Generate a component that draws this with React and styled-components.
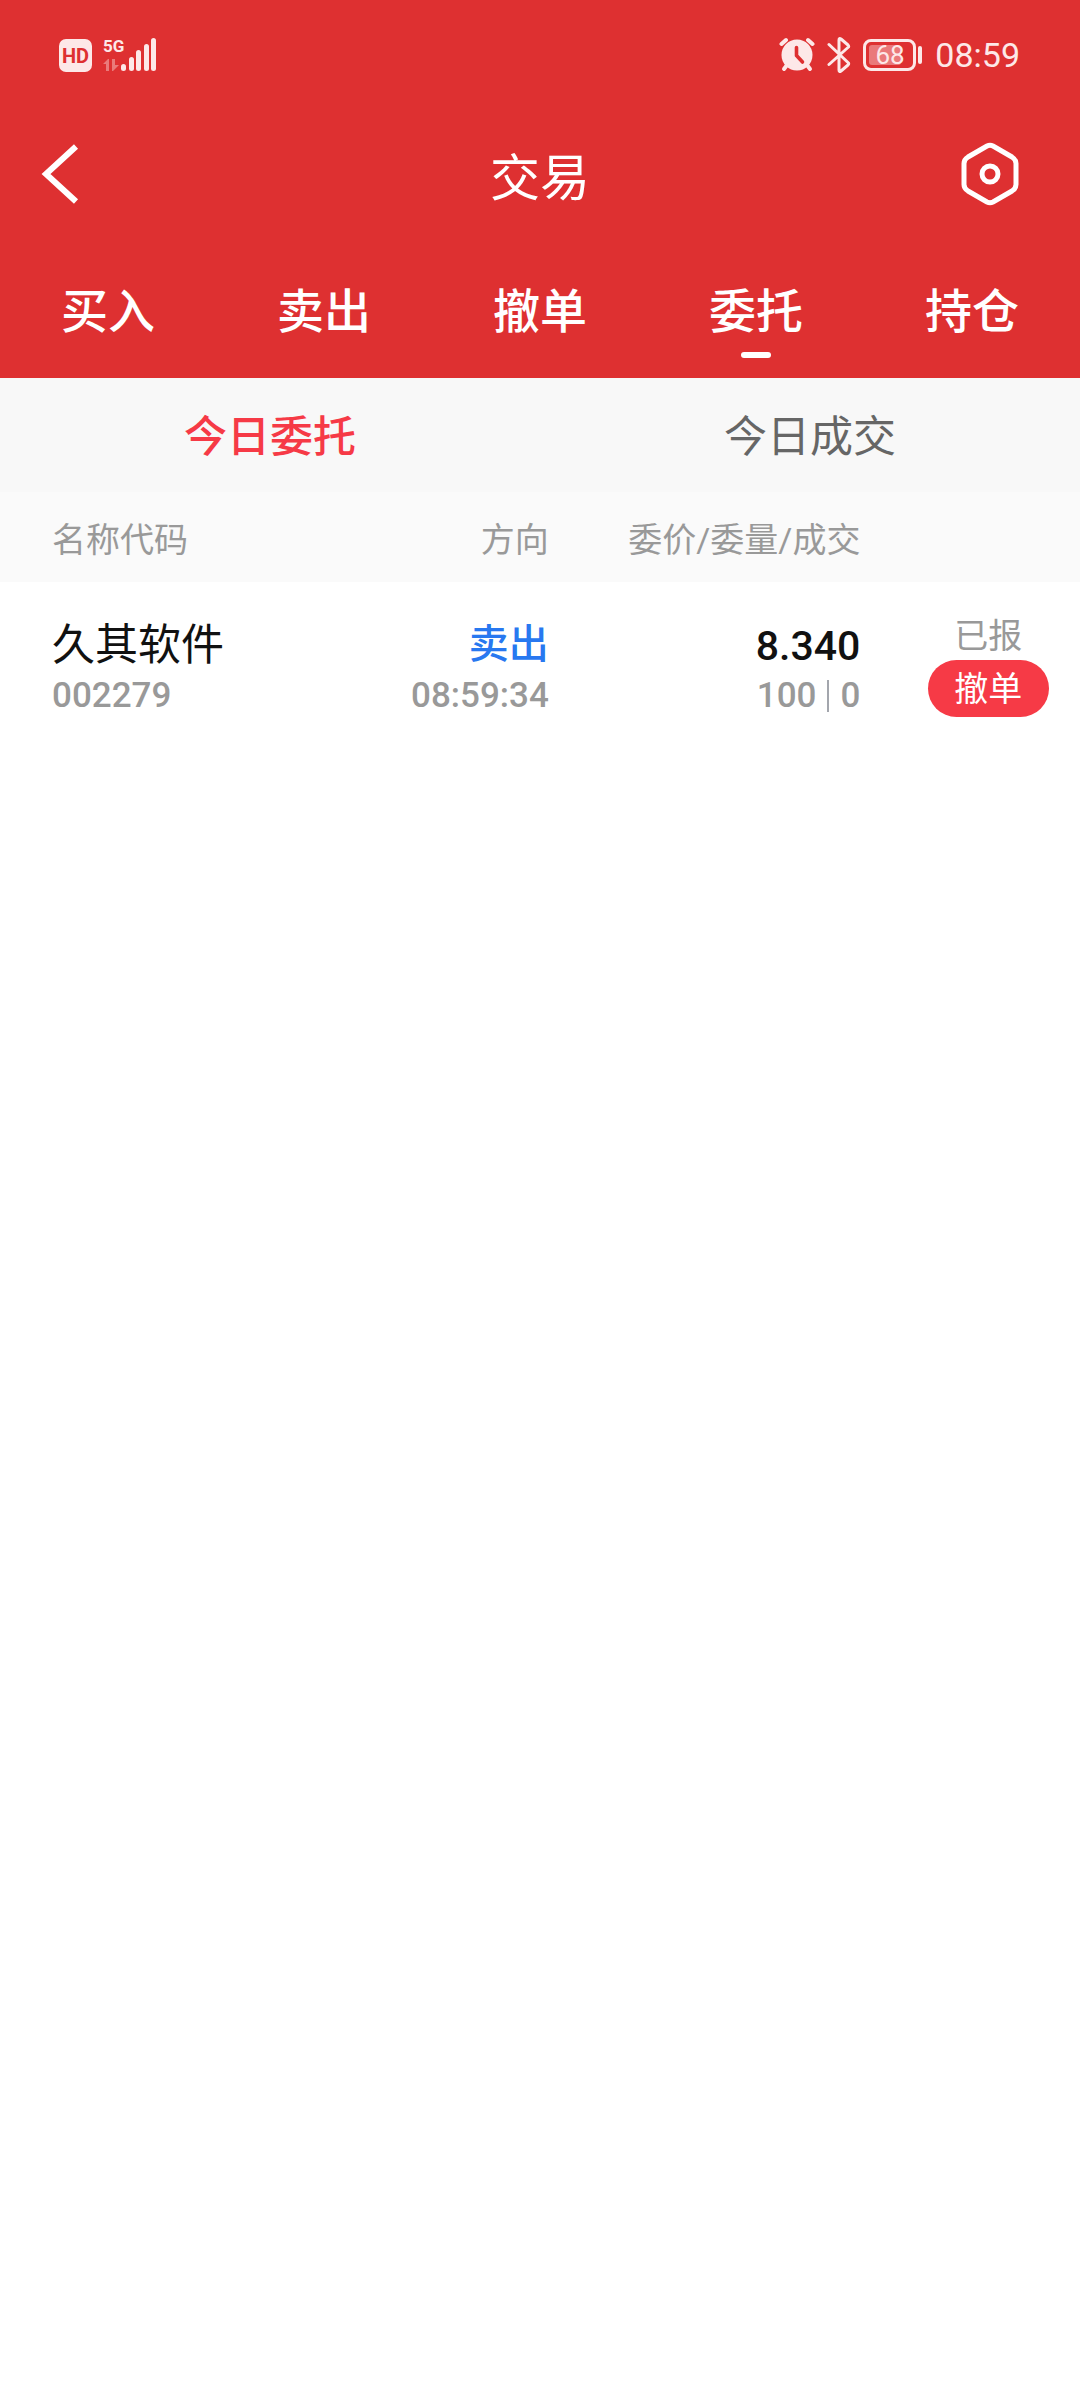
import styled, { createGlobalStyle } from "styled-components";

const GlobalStyle = createGlobalStyle`
  * {
    box-sizing: border-box;
  }
  body {
    margin: 0;
    background-color: #ffffff;
    font-family: Roboto, "Noto Sans CJK SC", sans-serif;
  }
  button {
    padding: 0;
    border: none;
    background: none;
    font-family: inherit;
    cursor: pointer;
  }
`;

const Header = styled.header`
  background-color: #de3031;
  color: white;
`;

const StatusBar = styled.div`
  display: flex;
  align-items: center;
  justify-content: space-between;
  height: 110px;
  padding: 0 60px 0 59px;
  color: #fde8e8;
`;

const StatusGroup = styled.div`
  display: flex;
  align-items: center;
  gap: ${({ $gap }) => $gap}px;
  svg {
    display: block;
  }
`;

const HdBadge = styled.span`
  width: 33px;
  height: 33px;
  border-radius: 7px;
  background-color: #fde8e8;
  color: #de3031;
  font-size: 20px;
  font-weight: 700;
  line-height: 34px;
  text-align: center;
`;

const Clock = styled.time`
  font-size: 34px;
  line-height: 40px;
`;

const TitleBar = styled.div`
  display: flex;
  align-items: center;
  height: 128px;
  h1 {
    margin: 0;
    font-family: "Noto Sans CJK SC", sans-serif;
    font-size: 50px;
    font-weight: 400;
    line-height: 64px;
  }
`;

const IconButton = styled.button`
  flex: 1;
  display: flex;
  align-items: center;
  justify-content: ${({ $align }) => $align};
  height: 80px;
  padding: 0 60px 0 40px;
  color: white;
`;

const MainTabs = styled.nav`
  display: flex;
  height: 140px;
`;

const MainTab = styled.button`
  flex: 1;
  display: flex;
  flex-direction: column;
  align-items: center;
  gap: 12px;
  padding-top: 38px;
  color: white;
  font-family: "Noto Sans CJK SC", sans-serif;
  font-size: 47px;
  font-weight: 500;
  line-height: 64px;
  &::after {
    content: "";
    width: 30px;
    height: 6px;
    border-radius: 3px;
    background-color: ${({ $active }) => ($active ? "white" : "transparent")};
  }
`;

const SubTabs = styled.div`
  display: flex;
  height: 114px;
  padding-bottom: 4px;
  background-color: #f8f8f8;
`;

const SubTab = styled.button`
  flex: 1;
  color: ${({ $active }) => ($active ? "#f63a46" : "#666666")};
  font-family: "Noto Sans CJK SC", sans-serif;
  font-size: 43px;
  font-weight: ${({ $active }) => ($active ? 500 : 400)};
  line-height: 64px;
`;

const OrderTable = styled.table`
  width: 100%;
  table-layout: fixed;
  border-collapse: collapse;
`;

const HeadCell = styled.th`
  width: ${({ $width }) => $width};
  height: 90px;
  padding: 0;
  padding-left: ${({ $left }) => $left || 0}px;
  padding-right: ${({ $right }) => $right || 0}px;
  background-color: #fafafa;
  color: #999999;
  font-size: 34px;
  font-weight: 400;
  text-align: ${({ $align }) => $align};
  white-space: nowrap;
`;

const Cell = styled.td`
  padding: 32px 0 20px;
  padding-left: ${({ $left }) => $left || 0}px;
  padding-right: ${({ $right }) => $right || 0}px;
  text-align: ${({ $align }) => $align};
  vertical-align: top;
`;

const Name = styled.div`
  color: #111111;
  font-family: "Noto Sans CJK SC", sans-serif;
  font-size: 43px;
  line-height: 54px;
`;

const Direction = styled(Name)`
  color: #2878f0;
  font-size: 40px;
  font-weight: 500;
`;

const Price = styled.div`
  color: #111111;
  font-size: 41px;
  font-weight: 500;
  line-height: 64px;
`;

const Detail = styled.div`
  color: #999999;
  font-size: 35px;
  font-weight: 500;
  line-height: 56px;
`;

const Amounts = styled(Detail)`
  display: flex;
  align-items: center;
  justify-content: flex-end;
  gap: 11px;
  line-height: 36px;
`;

const Divider = styled.span`
  width: 2px;
  height: 32px;
  background-color: #a3a6ad;
`;

const StatusCell = styled(Cell)`
  padding-top: 30px;
`;

const OrderStatus = styled.div`
  color: #999999;
  font-size: 34px;
  line-height: 48px;
`;

const CancelButton = styled.button`
  width: 121px;
  height: 57px;
  border-radius: 29px;
  background-color: #f63a46;
  color: white;
  font-size: 34px;
  line-height: 54px;
`;

function SignalIcon() {
  return (
    <svg width="56" height="44" viewBox="0 -4 56 44" fill="currentColor">
      <text x="1" y="15" fontSize="17" fontWeight="700">
        5G
      </text>
      <g opacity="0.4">
        <path d="M1 27 L6 22 H7 V34 H4 V27 Z" />
        <path d="M10 22 H13 V28 H17 L11 34 H10 Z" />
      </g>
      <rect x="19" y="27" width="5" height="7" rx="2.5" />
      <rect x="27" y="20" width="5" height="14" rx="2.5" />
      <rect x="34" y="13" width="5" height="21" rx="2.5" />
      <rect x="42" y="7" width="5" height="27" rx="2.5" />
      <rect x="49" y="1" width="5" height="33" rx="2.5" />
    </svg>
  );
}

function AlarmIcon() {
  return (
    <svg width="36" height="36" viewBox="0 0 36 36" fill="none">
      <g stroke="currentColor" strokeWidth="4" strokeLinecap="round">
        <path d="M2.5 7 L7 3 M33.5 7 L29 3" />
        <path d="M8 28 L5 32 M28 28 L31 32" />
      </g>
      <circle cx="18" cy="18" r="15.5" fill="currentColor" />
      <path
        d="M17.5 10.5 V18.5 L23.5 25"
        stroke="#de3031"
        strokeWidth="3.6"
        strokeLinecap="round"
        strokeLinejoin="round"
      />
    </svg>
  );
}

function BluetoothIcon() {
  return (
    <svg
      width="24"
      height="38"
      viewBox="0 0 24 38"
      fill="none"
      stroke="currentColor"
      strokeWidth="3"
      strokeLinecap="round"
      strokeLinejoin="round"
    >
      <path d="M2 8.5 L21.5 27 Q22 28 21 29 L14 35 Q12 36.5 12 34 V4 Q12 1.5 14 3 L21 9 Q22 10 21.5 11 L2 28.5" />
    </svg>
  );
}

function BatteryIcon() {
  return (
    <svg width="60" height="36" viewBox="0 0 60 36" fill="none">
      <rect
        x="1.5"
        y="3.5"
        width="50"
        height="29"
        rx="6.5"
        stroke="currentColor"
        strokeWidth="3"
      />
      <rect x="6" y="8" width="32" height="20" rx="3" fill="currentColor" opacity="0.4" />
      <rect x="55" y="9" width="4" height="18" rx="2" fill="currentColor" />
      <text x="27" y="27" fontSize="26" textAnchor="middle" fill="currentColor">
        68
      </text>
    </svg>
  );
}

function BackIcon() {
  return (
    <svg width="40" height="62" viewBox="0 0 40 62" fill="none">
      <path d="M36 3.5 L6 31 L36 58.5" stroke="currentColor" strokeWidth="6" />
    </svg>
  );
}

function SettingsIcon() {
  return (
    <svg
      width="60"
      height="64"
      viewBox="0 0 60 64"
      fill="none"
      stroke="currentColor"
      strokeWidth="5"
    >
      <path d="M27 4 Q30 2.5 33 4 L52 15 Q56 17.5 56 21.5 V42.5 Q56 46.5 52 49 L33 60 Q30 61.5 27 60 L8 49 Q4 46.5 4 42.5 V21.5 Q4 17.5 8 15 Z" />
      <circle cx="30" cy="32" r="8" />
    </svg>
  );
}

export default function App() {
  const tabs = ["买入", "卖出", "撤单", "委托", "持仓"];
  const orders = [
    {
      name: "久其软件",
      code: "002279",
      direction: "卖出",
      time: "08:59:34",
      price: "8.340",
      amount: "100",
      filled: "0",
      status: "已报",
    },
  ];

  return (
    <>
      <GlobalStyle />
      <Header>
        <StatusBar>
          <StatusGroup $gap={10}>
            <HdBadge>HD</HdBadge>
            <SignalIcon />
          </StatusGroup>
          <StatusGroup $gap={12}>
            <AlarmIcon />
            <BluetoothIcon />
            <BatteryIcon />
            <Clock>08:59</Clock>
          </StatusGroup>
        </StatusBar>
        <TitleBar>
          <IconButton $align="flex-start" aria-label="返回">
            <BackIcon />
          </IconButton>
          <h1>交易</h1>
          <IconButton $align="flex-end" aria-label="设置">
            <SettingsIcon />
          </IconButton>
        </TitleBar>
        <MainTabs>
          {tabs.map((tab) => (
            <MainTab key={tab} $active={tab === "委托"}>
              {tab}
            </MainTab>
          ))}
        </MainTabs>
      </Header>
      <SubTabs>
        <SubTab $active>今日委托</SubTab>
        <SubTab>今日成交</SubTab>
      </SubTabs>
      <OrderTable>
        <thead>
          <tr>
            <HeadCell $width="30%" $align="left" $left={52}>
              名称代码
            </HeadCell>
            <HeadCell $width="21%" $align="right" $right={2}>
              方向
            </HeadCell>
            <HeadCell $width="32%" $align="right" $right={36}>
              委价/委量/成交
            </HeadCell>
            <HeadCell $width="17%" $align="center" />
          </tr>
        </thead>
        <tbody>
          {orders.map((order) => (
            <tr key={order.code}>
              <Cell $align="left" $left={52}>
                <Name>{order.name}</Name>
                <Detail>{order.code}</Detail>
              </Cell>
              <Cell $align="right" $right={2}>
                <Direction>{order.direction}</Direction>
                <Detail>{order.time}</Detail>
              </Cell>
              <Cell $align="right" $right={36}>
                <Price>{order.price}</Price>
                <Amounts>
                  {order.amount}
                  <Divider />
                  {order.filled}
                </Amounts>
              </Cell>
              <StatusCell $align="center">
                <OrderStatus>{order.status}</OrderStatus>
                <CancelButton>撤单</CancelButton>
              </StatusCell>
            </tr>
          ))}
        </tbody>
      </OrderTable>
    </>
  );
}
